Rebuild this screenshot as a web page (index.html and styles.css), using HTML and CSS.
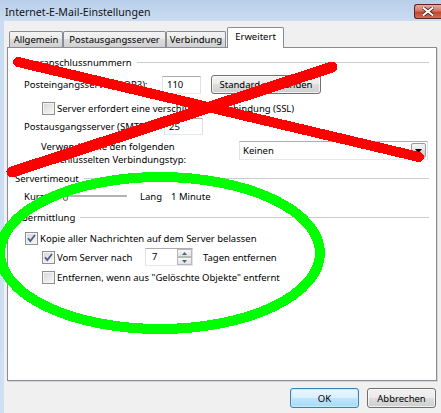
FILE: index.html
```html
<!DOCTYPE html>
<html lang="de">
<head>
<meta charset="utf-8">
<title>Internet-E-Mail-Einstellungen</title>
<link rel="stylesheet" href="styles.css">
</head>
<body>
<div class="window">
  <div class="titlebar">
    <span class="title">Internet-E-Mail-Einstellungen</span>
    <div class="close">
      <svg width="12" height="9" viewBox="0 0 12 9"><path d="M1.5 1 L10.5 8 M10.5 1 L1.5 8" stroke="#4a211c" stroke-width="3.6" stroke-linecap="square"/><path d="M1.5 1 L10.5 8 M10.5 1 L1.5 8" stroke="#ffffff" stroke-width="2" stroke-linecap="square"/></svg>
    </div>
  </div>
  <div class="client">
    <div class="tabs">
      <div class="tab t1">Allgemein</div>
      <div class="tab t2">Postausgangsserver</div>
      <div class="tab t3">Verbindung</div>
      <div class="tab active t4">Erweitert</div>
    </div>
    <div class="panel">
      <div class="group-head"><span>Serveranschlussnummern</span><i class="rule"></i></div>
      <div class="row row-pop">
        <span class="lbl-pop">Posteingangsserver (POP3):</span>
        <span class="input in-num">110</span>
        <span class="btn btn-std">Standard verwenden</span>
      </div>
      <div class="row row-ssl"><span class="check"></span><span>Server erfordert eine verschlüsselte Verbindung (SSL)</span></div>
      <div class="row row-smtp">
        <span class="lbl-smtp">Postausgangsserver (SMTP):</span>
        <span class="input in-num in-smtp">25</span>
      </div>
      <div class="row row-enc">
        <span class="enc-text">Verwenden Sie den folgenden<br>verschlüsselten Verbindungstyp:</span>
        <span class="select"><span class="select-val">Keinen</span><span class="drop"><svg width="7" height="4" viewBox="0 0 7 4"><path d="M0 0 H7 L3.5 4 Z" fill="#000"/></svg></span></span>
      </div>
      <div class="group-head gh2"><span>Servertimeout</span><i class="rule"></i></div>
      <div class="row row-slider">
        <span class="kurz">Kurz</span>
        <span class="slider"><span class="thumb"></span></span>
        <span class="lang">Lang</span>
        <span>1 Minute</span>
      </div>
      <div class="group-head gh3"><span>Übermittlung</span><i class="rule"></i></div>
      <div class="row row-cb1"><span class="check checked"><svg width="11" height="11" viewBox="0 0 11 11"><path d="M2 5.2 L4.3 8 L9 2" fill="none" stroke="#4b5d8c" stroke-width="1.8"/></svg></span><span>Kopie aller Nachrichten auf dem Server belassen</span></div>
      <div class="row row-cb2">
        <span class="check checked"><svg width="11" height="11" viewBox="0 0 11 11"><path d="M2 5.2 L4.3 8 L9 2" fill="none" stroke="#4b5d8c" stroke-width="1.8"/></svg></span>
        <span class="lbl-vom">Vom Server nach</span>
        <span class="spin"><span class="spin-val">7</span><span class="spin-btns"><span class="spin-b"><svg width="5" height="3" viewBox="0 0 5 3"><path d="M0 3 H5 L2.5 0 Z" fill="#4d6185"/></svg></span><span class="spin-b"><svg width="5" height="3" viewBox="0 0 5 3"><path d="M0 0 H5 L2.5 3 Z" fill="#4d6185"/></svg></span></span></span>
        <span class="tagen">Tagen entfernen</span>
      </div>
      <div class="row row-cb3"><span class="check"></span><span>Entfernen, wenn aus "Gelöschte Objekte" entfernt</span></div>
    </div>
    <div class="buttons">
      <span class="btn dlg-btn default">OK</span>
      <span class="btn dlg-btn">Abbrechen</span>
    </div>
  </div>
  <svg class="marks" width="441" height="413" viewBox="0 0 441 413" shape-rendering="crispEdges">
    <line x1="18" y1="62" x2="419" y2="157" stroke="#ff0000" stroke-width="10" stroke-linecap="round"/>
    <line x1="332" y1="67" x2="12" y2="172" stroke="#ff0000" stroke-width="11" stroke-linecap="round"/>
    <ellipse cx="160" cy="253" rx="160" ry="76" fill="none" stroke="#00ff00" stroke-width="10"/>
  </svg>
</div>
</body>
</html>
```
FILE: styles.css
```css
* { box-sizing: border-box; }
html, body { margin: 0; padding: 0; }
body {
  width: 441px;
  height: 413px;
  overflow: hidden;
  font-family: "Noto Sans", "Open Sans", sans-serif;
  font-size: 9.5px;
  color: #000;
  background: #cfe0f2;
}
.window {
  position: relative;
  width: 441px;
  height: 413px;
  overflow: hidden;
  background: linear-gradient(#b8cfe9, #cadcf1 20px, #cfe0f2);
}
.titlebar {
  height: 21px;
  display: flex;
  align-items: flex-start;
}
.title {
  font-size: 10.6px;
  line-height: 14px;
  margin: 5px 0 0 5px;
  color: #141414;
}
.close {
  margin-left: auto;
  margin-top: 4px;
  width: 27px;
  height: 15px;
  border: 1px solid #5b2722;
  border-right: none;
  border-radius: 3px 0 0 3px;
  background: linear-gradient(#e9aa9c, #d47866 45%, #c5432f 55%, #d26d57);
  display: flex;
  align-items: center;
  justify-content: center;
  padding-right: 1px;
}
.client {
  margin-left: 4px;
  height: 392px;
  background: #f0f0f0;
}
.tabs {
  display: flex;
  align-items: flex-end;
  height: 26px;
  padding-left: 5px;
}
.tab {
  height: 16px;
  border: 1px solid #898c95;
  border-bottom: none;
  border-radius: 2px 2px 0 0;
  background: linear-gradient(#f3f3f3, #ebebeb 50%, #dddddd 50%, #d0d0d0);
  text-align: center;
  line-height: 15px;
  white-space: nowrap;
}
.t1 { width: 54px; }
.t2 { width: 103px; }
.t3 { width: 60px; }
.tab.active {
  width: 57px;
  height: 21px;
  margin-left: 1px;
  margin-bottom: -1px;
  background: #fff;
  position: relative;
  z-index: 1;
  line-height: 17px;
}
.panel {
  margin-left: 3px;
  width: 430px;
  height: 334px;
  border: 1px solid #898c95;
  background: #fff;
  padding: 7px 7px 0 7px;
  box-shadow: 1px 1px 0 #d6d6d6;
}
.group-head {
  display: flex;
  align-items: center;
  height: 14px;
  white-space: nowrap;
}
.rule {
  flex: 1;
  height: 1px;
  background: #c9cdd2;
  margin-left: 5px;
}
.gh2 { margin-top: 5px; }
.gh3 { margin-top: 7px; }
.row {
  display: flex;
  align-items: center;
  white-space: nowrap;
}
.row-pop { margin-top: 6px; height: 19px; padding-left: 9px; }
.lbl-pop { width: 138px; }
.input {
  background: #fff;
  border: 1px solid;
  border-color: #abadb3 #dbdfe6 #e3e9ef #e2e3ea;
  border-radius: 1px;
}
.in-num {
  width: 39px;
  height: 18px;
  padding-left: 4px;
  line-height: 16px;
}
.in-smtp { height: 17px; line-height: 15px; }
.btn {
  display: flex;
  align-items: center;
  justify-content: center;
  border: 1px solid #707070;
  border-radius: 3px;
  background: linear-gradient(#f2f2f2, #ebebeb 50%, #dddddd 50%, #cfcfcf);
  box-shadow: inset 0 0 0 1px rgba(255,255,255,0.7);
}
.btn-std { margin-left: 10px; width: 110px; height: 19px; }
.row-ssl { margin-top: 8px; height: 13px; padding-left: 27px; }
.check {
  flex: none;
  width: 13px;
  height: 13px;
  margin-right: 2px;
  border: 1px solid #8e8f8f;
  background: linear-gradient(135deg, #d6d6d6, #f8f8f8);
  box-shadow: inset 0 0 0 1px #f4f4f4;
  display: flex;
  align-items: center;
  justify-content: center;
}
.row-smtp { margin-top: 3px; height: 17px; padding-left: 9px; }
.lbl-smtp { width: 140px; }
.row-enc { margin-top: 5px; padding-left: 26px; align-items: flex-start; }
.enc-text { width: 198px; line-height: 13px; }
.select {
  margin-top: 1px;
  width: 189px;
  height: 19px;
  display: flex;
  align-items: center;
  background: #fff;
  border: 1px solid #abadb3;
  border-color: #abadb3 #dbdfe6 #e3e9ef #e2e3ea;
}
.select-val { flex: 1; padding-left: 3px; }
.drop {
  width: 15px;
  height: 15px;
  margin-right: 1px;
  border: 1px solid #9a9a9a;
  border-radius: 2px;
  background: linear-gradient(#f4f4f4, #e6e6e6 50%, #d6d6d6 50%, #cacaca);
  display: flex;
  align-items: center;
  justify-content: center;
}
.row-slider { margin-top: 4px; height: 14px; padding-left: 9px; }
.kurz { width: 28px; }
.slider {
  width: 75px;
  height: 14px;
  display: flex;
  align-items: center;
  background: linear-gradient(#b4b4b4, #b4b4b4) no-repeat left 6px / 100% 2px;
}
.thumb {
  margin-left: 11px;
  width: 5px;
  height: 10px;
  border: 1px solid #7a7a7a;
  border-radius: 1px 1px 2px 2px;
  background: linear-gradient(#f0f0f0, #d8d8d8);
}
.lang { margin-left: 13px; width: 31px; }
.row-cb1 { margin-top: 8px; height: 13px; padding-left: 10px; }
.row-cb2 { margin-top: 3px; height: 18px; padding-left: 27px; }
.lbl-vom { width: 88px; }
.spin {
  width: 48px;
  height: 18px;
  display: flex;
  background: #fff;
  border: 1px solid;
  border-color: #abadb3 #dbdfe6 #e3e9ef #e2e3ea;
}
.spin-val { flex: 1; padding-left: 6px; line-height: 16px; }
.spin-btns { width: 15px; display: flex; flex-direction: column; }
.spin-b {
  flex: 1;
  border: 1px solid #b8b8b8;
  background: linear-gradient(#f6f6f6, #e2e2e2);
  display: flex;
  align-items: center;
  justify-content: center;
}
.tagen { margin-left: 10px; }
.row-cb3 { margin-top: 5px; height: 13px; padding-left: 27px; }
.buttons {
  display: flex;
  justify-content: flex-end;
  gap: 8px;
  margin-top: 7px;
  padding-right: 5px;
}
.dlg-btn { width: 69px; height: 20px; }
.btn.default {
  border-color: #3c7fb1;
  background: linear-gradient(#eaf6fd, #d9f0fc 50%, #bee6fd 50%, #a9dbf6);
  box-shadow: inset 0 0 0 1px #c8ecff;
}
.marks {
  position: absolute;
  left: 0;
  top: 0;
  pointer-events: none;
}
```
